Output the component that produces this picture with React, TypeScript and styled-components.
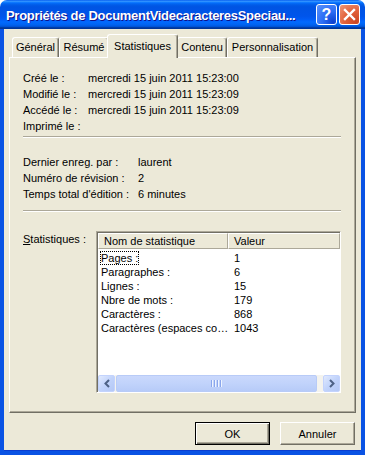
import React from "react";
import styled, { createGlobalStyle, css } from "styled-components";

const GlobalStyle = createGlobalStyle`
    html, body {
        margin: 0;
        padding: 0;
        background: #ffffff;
    }
    body {
        font-family: "Liberation Sans", Arial, sans-serif;
        font-size: 11px;
        color: #000000;
    }
`;

const generalRows = [
    { label: "Créé le :", value: "mercredi 15 juin 2011 15:23:00" },
    { label: "Modifié le :", value: "mercredi 15 juin 2011 15:23:09" },
    { label: "Accédé le :", value: "mercredi 15 juin 2011 15:23:09" },
    { label: "Imprimé le :", value: "" },
];

const editRows = [
    { label: "Dernier enreg. par :", value: "laurent" },
    { label: "Numéro de révision :", value: "2" },
    { label: "Temps total d'édition :", value: "6 minutes" },
];

// le dernier nom est tronqué comme dans la liste d'origine
const stats = [
    { name: "Pages :", value: "1" },
    { name: "Paragraphes :", value: "6" },
    { name: "Lignes :", value: "15" },
    { name: "Nbre de mots :", value: "179" },
    { name: "Caractères :", value: "868" },
    { name: "Caractères (espaces co…", value: "1043" },
];

const tabs = [
    { label: "Général", width: 47 },
    { label: "Résumé", width: 50 },
    { label: "Statistiques", width: 71, active: true },
    { label: "Contenu", width: 50 },
    { label: "Personnalisation", width: 91 },
];

const App = () => {
    return (
        <>
            <GlobalStyle />
            <Window>
                <TitleBar>
                    <Title>Propriétés de DocumentVidecaracteresSpeciau...</Title>
                    <TitleButtons>
                        <HelpButton>?</HelpButton>
                        <CloseButton>
                            <svg width="13" height="13" viewBox="0 0 13 13">
                                <path
                                    d="M2 2 L11 11 M11 2 L2 11"
                                    stroke="#ffffff"
                                    strokeWidth="2.4"
                                    strokeLinecap="square"
                                />
                            </svg>
                        </CloseButton>
                    </TitleButtons>
                </TitleBar>

                <Frame>
                    <TabStrip>
                        {tabs.map((t) => (
                            <Tab key={t.label} $width={t.width} $active={!!t.active}>
                                {t.label}
                            </Tab>
                        ))}
                    </TabStrip>

                    <Panel>
                        <InfoGrid $labelWidth={65}>
                            {generalRows.map((r) => (
                                <React.Fragment key={r.label}>
                                    <span>{r.label}</span>
                                    <span>{r.value}</span>
                                </React.Fragment>
                            ))}
                        </InfoGrid>
                        <Separator $top={2} />
                        <InfoGrid $labelWidth={115} $top={16}>
                            {editRows.map((r) => (
                                <React.Fragment key={r.label}>
                                    <span>{r.label}</span>
                                    <span>{r.value}</span>
                                </React.Fragment>
                            ))}
                        </InfoGrid>
                        <Separator $top={8} />

                        <StatsArea>
                            <StatsLabel>
                                <u>S</u>tatistiques :
                            </StatsLabel>
                            <ListBox>
                                <ListHeader>
                                    <HeaderCell $width={130}>Nom de statistique</HeaderCell>
                                    <HeaderCell>Valeur</HeaderCell>
                                </ListHeader>
                                <ListRows>
                                    {stats.map((s, i) => (
                                        <ListRow key={s.name}>
                                            <NameCell>
                                                <NameText $focused={i === 0}>{s.name}</NameText>
                                            </NameCell>
                                            <ValueCell>{s.value}</ValueCell>
                                        </ListRow>
                                    ))}
                                </ListRows>
                                <HScroll>
                                    <ScrollArrow>
                                        <svg width="8" height="9" viewBox="0 0 8 9">
                                            <path
                                                d="M6 1 L2.5 4.5 L6 8"
                                                fill="none"
                                                stroke="#4D6185"
                                                strokeWidth="2"
                                            />
                                        </svg>
                                    </ScrollArrow>
                                    <ScrollTrack>
                                        <ScrollThumb>
                                            <Grip />
                                            <Grip />
                                            <Grip />
                                            <Grip />
                                        </ScrollThumb>
                                    </ScrollTrack>
                                    <ScrollArrow>
                                        <svg width="8" height="9" viewBox="0 0 8 9">
                                            <path
                                                d="M2 1 L5.5 4.5 L2 8"
                                                fill="none"
                                                stroke="#4D6185"
                                                strokeWidth="2"
                                            />
                                        </svg>
                                    </ScrollArrow>
                                </HScroll>
                            </ListBox>
                        </StatsArea>
                    </Panel>

                    <ButtonRow>
                        <DialogButton $default>OK</DialogButton>
                        <DialogButton>Annuler</DialogButton>
                    </ButtonRow>
                </Frame>
            </Window>
        </>
    );
};

export default App;

const Window = styled.div`
    width: 365px;
    height: 455px;
    display: flex;
    flex-direction: column;
    border-radius: 7px 7px 0 0;
    overflow: hidden;
`;

const TitleBar = styled.div`
    height: 29px;
    flex-shrink: 0;
    display: flex;
    align-items: center;
    padding: 0 5px 0 6px;
    background: linear-gradient(
        #0058ee 0%,
        #3593ff 4%,
        #288eff 6%,
        #127dff 8%,
        #036ffc 10%,
        #0262ee 14%,
        #0057e5 20%,
        #0054e3 24%,
        #0055eb 56%,
        #005bf5 66%,
        #026afe 76%,
        #0062ef 86%,
        #0052d6 92%,
        #0040ab 94%,
        #003092 100%
    );
`;

const Title = styled.div`
    flex: 1;
    color: #ffffff;
    font-family: "Liberation Sans", Arial, sans-serif;
    font-weight: bold;
    font-size: 13px;
    letter-spacing: -0.3px;
    text-shadow: 1px 1px #0f1089;
    white-space: nowrap;
    overflow: hidden;
    padding-top: 1px;
`;

const TitleButtons = styled.div`
    display: flex;
    gap: 2px;
`;

const titleButton = css`
    width: 21px;
    height: 21px;
    box-sizing: border-box;
    border: 1px solid #ffffff;
    border-radius: 3px;
    display: flex;
    align-items: center;
    justify-content: center;
    color: #ffffff;
`;

const HelpButton = styled.div`
    ${titleButton};
    background: radial-gradient(circle at 85% 90%, #0c3fce 0%, #2a6df5 45%, #5a92fb 100%);
    font-family: "Liberation Sans", Arial, sans-serif;
    font-weight: bold;
    font-size: 16px;
`;

const CloseButton = styled.div`
    ${titleButton};
    background: radial-gradient(circle at 85% 90%, #cc4622 0%, #e2613a 50%, #f0997a 100%);
`;

const Frame = styled.div`
    flex: 1;
    display: flex;
    flex-direction: column;
    background: #ece9d8;
    border: 4px solid #0a53e4;
    border-top: 0;
    box-shadow: inset 0 -1px #0a3ed0;
    padding: 5px 5px 0 5px;
`;

const TabStrip = styled.div`
    height: 23px;
    display: flex;
    align-items: flex-end;
    padding-left: 3px;
    position: relative;
    z-index: 1;
`;

const Tab = styled.div<{ $width: number; $active: boolean }>`
    width: ${({ $width }) => $width}px;
    box-sizing: border-box;
    height: 20px;
    line-height: 19px;
    text-align: center;
    background: #ece9d8;
    border-top: 1px solid #ffffff;
    border-left: 1px solid #ffffff;
    border-right: 1px solid #716f64;
    box-shadow: inset -1px 0 #aca899;
    border-radius: 3px 3px 0 0;

    ${({ $active }) =>
        $active &&
        css`
            height: 24px;
            line-height: 22px;
            margin: 0 -1px -1px -2px;
            position: relative;
            z-index: 2;
        `}
`;

const Panel = styled.div`
    height: 356px;
    box-sizing: border-box;
    display: flex;
    flex-direction: column;
    padding: 12px 14px 0 13px;
    border-top: 1px solid #ffffff;
    border-left: 1px solid #ffffff;
    border-right: 1px solid #716f64;
    border-bottom: 1px solid #716f64;
    box-shadow: inset -1px -1px #aca899;
`;

const InfoGrid = styled.div<{ $labelWidth: number; $top?: number }>`
    display: grid;
    grid-template-columns: ${({ $labelWidth }) => $labelWidth}px 1fr;
    grid-auto-rows: 16px;
    align-items: center;
    line-height: 16px;
    margin-top: ${({ $top }) => $top || 0}px;
    white-space: nowrap;
`;

const Separator = styled.div<{ $top: number }>`
    margin-top: ${({ $top }) => $top}px;
    border-top: 1px solid #aca899;
    border-bottom: 1px solid #ffffff;
`;

const StatsArea = styled.div`
    margin-top: 19px;
    display: grid;
    grid-template-columns: 73px 1fr;
    align-items: start;
`;

const StatsLabel = styled.div`
    line-height: 16px;
`;

const ListBox = styled.div`
    height: 162px;
    box-sizing: border-box;
    display: flex;
    flex-direction: column;
    background: #ffffff;
    border-top: 1px solid #aca899;
    border-left: 1px solid #aca899;
    border-right: 1px solid #ffffff;
    border-bottom: 1px solid #ffffff;
    box-shadow: inset 1px 1px #716f64;
    padding: 1px 0 0 1px;
`;

const ListHeader = styled.div`
    height: 16px;
    display: flex;
    background: #ece9d8;
    flex-shrink: 0;
`;

const HeaderCell = styled.div<{ $width?: number }>`
    ${({ $width }) => ($width ? `width: ${$width}px;` : "flex: 1;")}
    box-sizing: border-box;
    padding-left: 5px;
    line-height: 15px;
    border-top: 1px solid #ffffff;
    border-left: 1px solid #ffffff;
    border-right: 1px solid #aca899;
    border-bottom: 1px solid #aca899;
    white-space: nowrap;
`;

const ListRows = styled.div`
    flex: 1;
    padding-top: 2px;
`;

const ListRow = styled.div`
    height: 14px;
    line-height: 14px;
    display: flex;
    white-space: nowrap;
`;

const NameCell = styled.div`
    width: 130px;
    box-sizing: border-box;
    padding-left: 2px;
    padding-right: 4px;
    display: flex;
`;

const NameText = styled.span<{ $focused: boolean }>`
    display: block;
    padding: 0 1px;
    ${({ $focused }) =>
        $focused &&
        css`
            outline: 1px dotted #000000;
            outline-offset: -1px;
        `}
`;

const ValueCell = styled.div`
    flex: 1;
    padding-left: 6px;
`;

const HScroll = styled.div`
    height: 17px;
    display: flex;
    flex-shrink: 0;
    background: #fbfbf8;
`;

const ScrollArrow = styled.div`
    width: 17px;
    height: 17px;
    box-sizing: border-box;
    border: 1px solid #c3d3fd;
    border-radius: 2px;
    background: linear-gradient(135deg, #e1eafe 0%, #c1d3fb 50%, #b4c8f6 100%);
    display: flex;
    align-items: center;
    justify-content: center;
`;

const ScrollTrack = styled.div`
    flex: 1;
    display: flex;
    padding: 0 6px 0 1px;
    background: #f4f3ee;
`;

const ScrollThumb = styled.div`
    flex: 1;
    box-sizing: border-box;
    border: 1px solid #b8cbf7;
    border-radius: 2px;
    background: linear-gradient(#cad8fc, #c1d3fb 50%, #b7cbf8);
    display: flex;
    align-items: center;
    justify-content: center;
    gap: 1px;
`;

const Grip = styled.div`
    width: 1px;
    height: 7px;
    background: #8aa6ec;
    border-right: 1px solid #eef4fe;
`;

const ButtonRow = styled.div`
    display: flex;
    justify-content: flex-end;
    gap: 10px;
    margin-top: 9px;
    padding-right: 1px;
`;

const DialogButton = styled.div<{ $default?: boolean }>`
    width: 75px;
    height: 23px;
    box-sizing: border-box;
    display: flex;
    align-items: center;
    justify-content: center;
    background: #ece9d8;
    border-top: 1px solid #ffffff;
    border-left: 1px solid #ffffff;
    border-right: 1px solid #716f64;
    border-bottom: 1px solid #716f64;
    box-shadow: inset -1px -1px #aca899;

    ${({ $default }) =>
        $default &&
        css`
            border: 1px solid #000000;
            box-shadow: inset 1px 1px #ffffff, inset -1px -1px #716f64, inset -2px -2px #aca899;
        `}
`;
